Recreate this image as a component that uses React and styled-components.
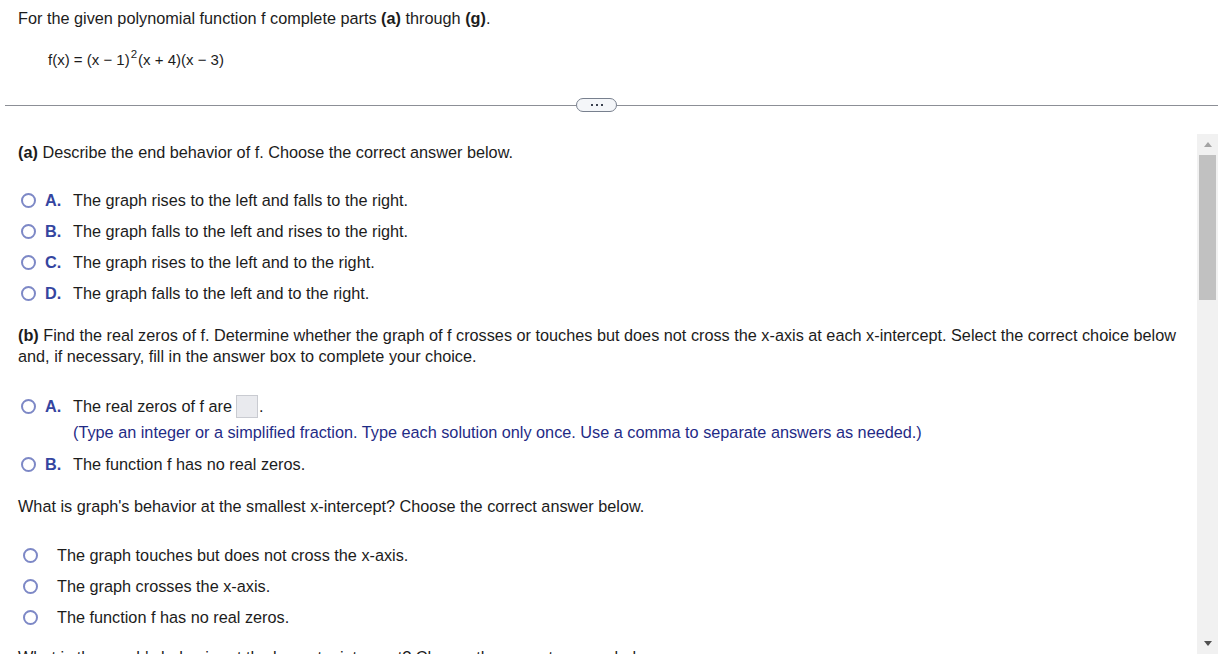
import styled, { createGlobalStyle } from "styled-components";

const GlobalStyle = createGlobalStyle`
  html, body {
    margin: 0;
    padding: 0;
    background: #ffffff;
  }
  body {
    font-family: "Liberation Sans", Arial, sans-serif;
    font-size: 16.25px;
    color: #1c1c1c;
  }
`;

const Page = styled.div`
  width: 1229px;
  height: 669px;
  display: flex;
  flex-direction: column;
  overflow: hidden;
`;

const Header = styled.header`
  height: 92px;
  box-sizing: border-box;
  padding: 8px 18px 0;
`;

const Title = styled.p`
  margin: 0;
  line-height: 20px;
`;

const Formula = styled.p`
  margin: 22px 0 0 30px;
  line-height: 20px;
  font-size: 15px;
  sup {
    font-size: 11.5px;
    line-height: 0;
    vertical-align: 7px;
    margin: 0 1px;
  }
`;

const DividerRow = styled.div`
  height: 26px;
  margin: 0 11px 0 5px;
  display: flex;
  align-items: center;
`;

const Line = styled.div`
  flex: ${(p) => (p.$width ? "none" : 1)};
  width: ${(p) => (p.$width ? `${p.$width}px` : "auto")};
  height: 1px;
  background: #8c8f96;
`;

const Pill = styled.button`
  width: 41px;
  height: 14px;
  padding: 0;
  border: 1px solid #78808e;
  border-radius: 7px;
  background: #f4f6f9;
  display: flex;
  align-items: center;
  justify-content: center;
  gap: 3px;
`;

const Dot = styled.span`
  width: 2px;
  height: 2px;
  background: #3c4250;
`;

const Body = styled.div`
  margin-top: 16px;
  height: 520px;
  display: flex;
  margin-right: 11px;
`;

const Content = styled.div`
  flex: 1;
  overflow: hidden;
  padding: 8px 12px 0 18px;
`;

const Para = styled.p`
  margin: ${(p) => p.$mt || 0}px 0 0;
  line-height: 21px;
  b {
    font-weight: bold;
  }
`;

const OptionList = styled.div`
  margin-top: ${(p) => p.$mt || 0}px;
  display: flex;
  flex-direction: column;
`;

const OptionRow = styled.div`
  height: 31px;
  display: flex;
  align-items: center;
  padding-left: ${(p) => (p.$plain ? 5 : 3)}px;
`;

const Radio = styled.span`
  width: 15px;
  height: 15px;
  box-sizing: border-box;
  border: 2px solid #7d88c6;
  border-radius: 50%;
  background: #fff;
  flex-shrink: 0;
`;

const Letter = styled.span`
  width: 28px;
  margin-left: 9px;
  color: #3445a0;
  font-weight: bold;
`;

const OptionText = styled.span`
  line-height: 21px;
  margin-left: ${(p) => (p.$plain ? 19 : 0)}px;
  display: flex;
  align-items: center;
`;

const AnswerBox = styled.span`
  display: inline-block;
  width: 22px;
  height: 23px;
  box-sizing: border-box;
  margin: 0 1px 0 4px;
  border: 1px solid #c9cbd1;
  background: #e9eaee;
`;

const Hint = styled.p`
  margin: 0 0 0 55px;
  line-height: 21px;
  color: #1f2b86;
`;

const Scrollbar = styled.div`
  width: 21px;
  height: 520px;
  background: #f1f1f1;
  display: flex;
  flex-direction: column;
  align-items: center;
`;

const Arrow = styled.div`
  height: 21px;
  display: flex;
  align-items: center;
  justify-content: center;
  color: ${(p) => p.$color};
`;

const Thumb = styled.div`
  width: 17px;
  height: 145px;
  background: #c1c1c1;
`;

const Track = styled.div`
  flex: 1;
`;

const choicesA = [
  ["A.", "The graph rises to the left and falls to the right."],
  ["B.", "The graph falls to the left and rises to the right."],
  ["C.", "The graph rises to the left and to the right."],
  ["D.", "The graph falls to the left and to the right."],
];

const behavior = [
  "The graph touches but does not cross the x-axis.",
  "The graph crosses the x-axis.",
  "The function f has no real zeros.",
];

const App = () => {
  return (
    <Page>
      <GlobalStyle />
      <Header>
        <Title>
          For the given polynomial function f complete parts <b>(a)</b> through <b>(g)</b>.
        </Title>
        <Formula>
          f(x) = (x − 1)<sup>2</sup>(x + 4)(x − 3)
        </Formula>
      </Header>

      <DividerRow>
        <Line $width={571} />
        <Pill>
          <Dot />
          <Dot />
          <Dot />
        </Pill>
        <Line />
      </DividerRow>

      <Body>
        <Content>
          <Para>
            <b>(a)</b> Describe the end behavior of f. Choose the correct answer below.
          </Para>
          <OptionList $mt={22}>
            {choicesA.map(([letter, text]) => (
              <OptionRow key={letter}>
                <Radio />
                <Letter>{letter}</Letter>
                <OptionText>{text}</OptionText>
              </OptionRow>
            ))}
          </OptionList>

          <Para $mt={16}>
            <b>(b)</b> Find the real zeros of f. Determine whether the graph of f crosses or
            touches but does not cross the x-axis at each x-intercept. Select the correct choice
            below and, if necessary, fill in the answer box to complete your choice.
          </Para>
          <OptionList $mt={24}>
            <OptionRow>
              <Radio />
              <Letter>A.</Letter>
              <OptionText>
                The real zeros of f are
                <AnswerBox />.
              </OptionText>
            </OptionRow>
            <Hint>
              (Type an integer or a simplified fraction. Type each solution only once. Use a
              comma to separate answers as needed.)
            </Hint>
          </OptionList>
          <OptionList $mt={6}>
            <OptionRow>
              <Radio />
              <Letter>B.</Letter>
              <OptionText>The function f has no real zeros.</OptionText>
            </OptionRow>
          </OptionList>

          <Para $mt={16}>What is graph's behavior at the smallest x-intercept? Choose the correct answer below.</Para>
          <OptionList $mt={23}>
            {behavior.map((text) => (
              <OptionRow key={text} $plain>
                <Radio />
                <OptionText $plain>{text}</OptionText>
              </OptionRow>
            ))}
          </OptionList>

          <Para $mt={14}>What is the graph's behavior at the largest x-intercept? Choose the correct answer below.</Para>
        </Content>

        <Scrollbar>
          <Arrow $color="#a3a3a3">
            <svg width="8" height="5" viewBox="0 0 8 5">
              <path d="M0 5 L4 0 L8 5 Z" fill="currentColor" />
            </svg>
          </Arrow>
          <Thumb />
          <Track />
          <Arrow $color="#505050">
            <svg width="8" height="5" viewBox="0 0 8 5">
              <path d="M0 0 L8 0 L4 5 Z" fill="currentColor" />
            </svg>
          </Arrow>
        </Scrollbar>
      </Body>
    </Page>
  );
};

export default App;
